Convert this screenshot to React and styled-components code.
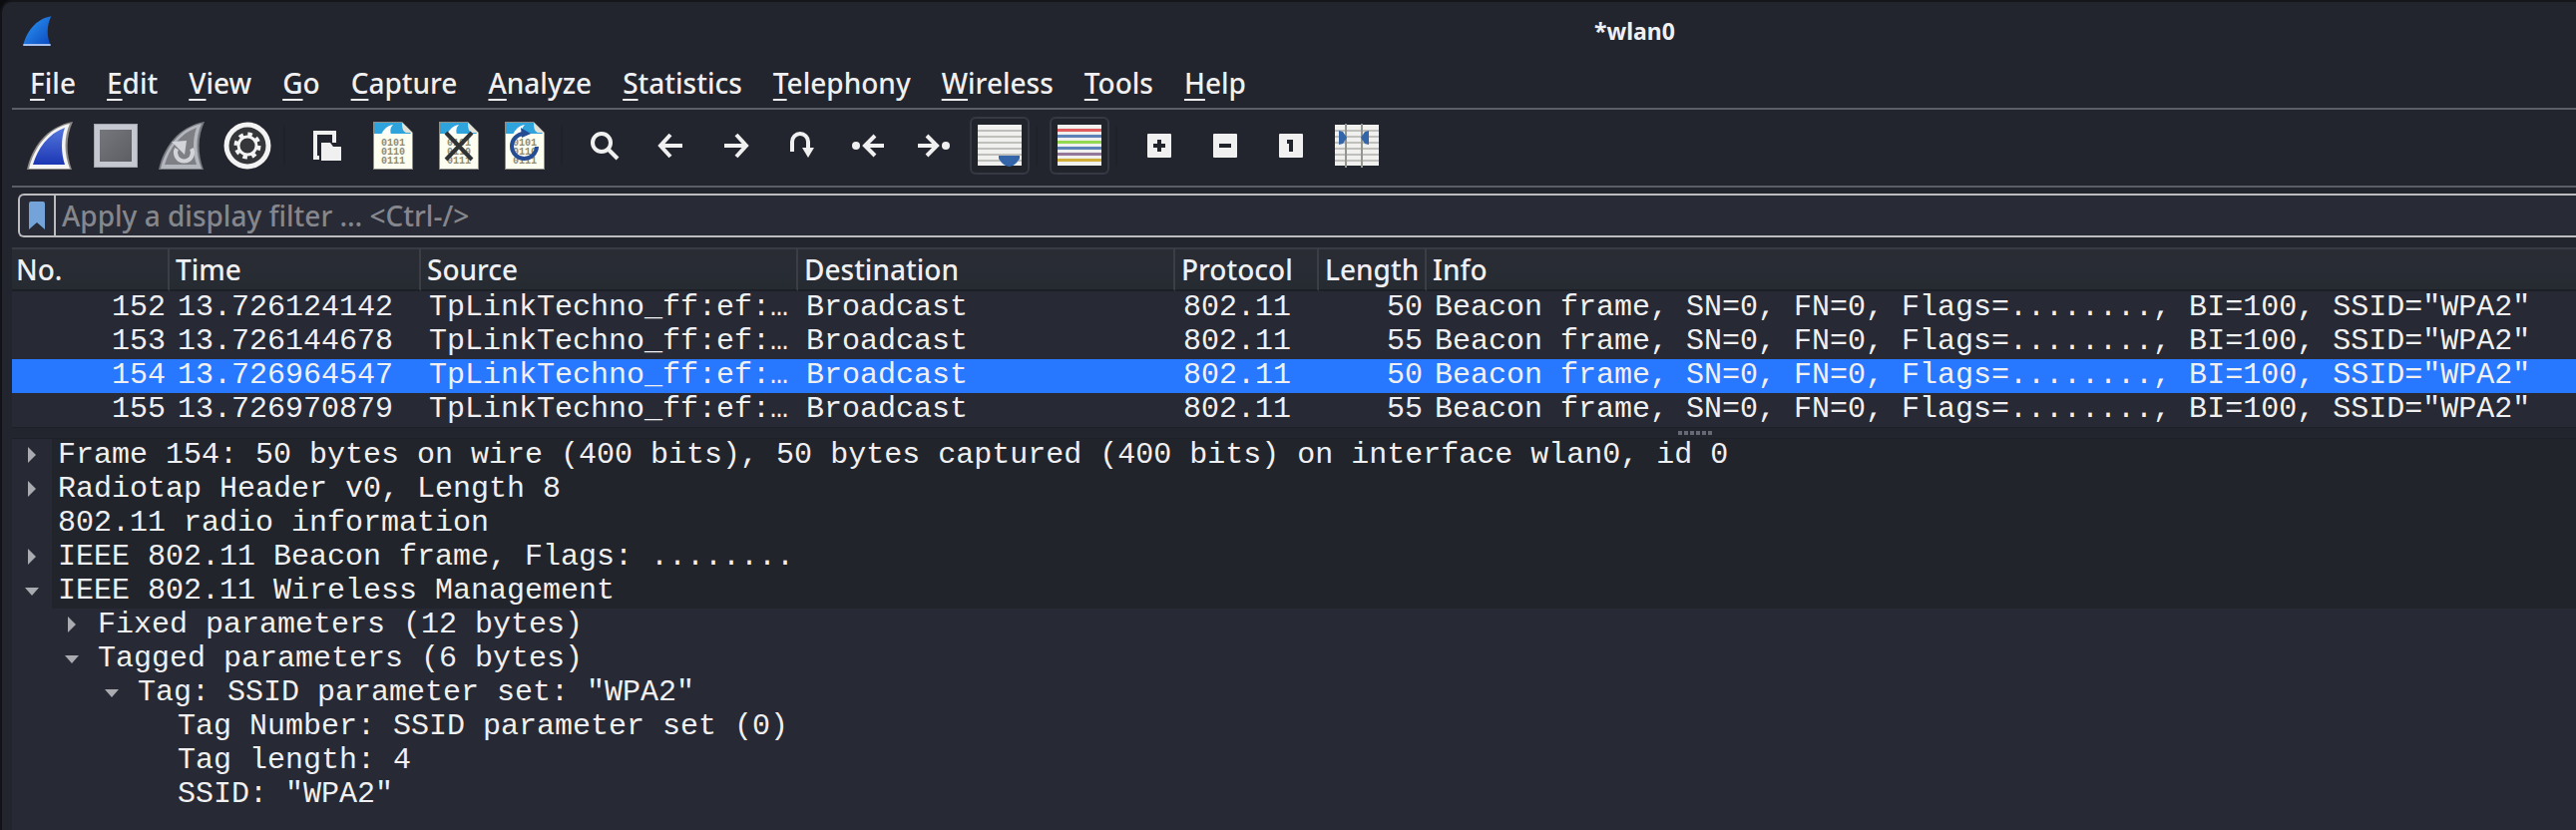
import React from "react";
import styled, { createGlobalStyle, css } from "styled-components";

const sans = `"Noto Sans", sans-serif`;
const mono = `"Liberation Mono", monospace`;

const GlobalStyle = createGlobalStyle`
  * { box-sizing: border-box; }
  body { margin: 0; background: #0c0d10; }
  button { font: inherit; color: inherit; background: none; border: 0; padding: 0; }
`;

const Window = styled.main`
  min-height: 100vh;
  display: flex;
  flex-direction: column;
  padding-left: 10px;
  background: #23252e;
  border-left: 2px solid #111318;
  border-top: 2px solid #14161a;
  border-top-left-radius: 12px;
  color: #f0f0f2;
  font-family: ${sans};
  font-size: 28px;
  font-weight: 500;
`;

const TitleBar = styled.header`
  display: flex;
  align-items: center;
  gap: 8px;
  height: 60px;
  padding: 0 0 2px 10px;
`;

const Title = styled.h1`
  margin: 0 0 0 60%;
  font-size: 23px;
  font-weight: 700;
  line-height: 32px;
`;

const Logo = styled.span`
  display: flex;
  width: 32px;
`;

const MenuBar = styled.nav`
  display: flex;
  gap: 31px;
  height: 48px;
  padding: 0 18px;
  border-bottom: 2px solid #5b5d67;
`;

const MenuItem = styled.button`
  height: 42px;
  line-height: 40px;
  u { text-decoration-thickness: 2px; text-underline-offset: 5px; }
`;

const Toolbar = styled.div`
  display: flex;
  align-items: center;
  gap: 6px;
  height: 78px;
  padding: 0 8px 4px;
  border-bottom: 2px solid #5b5d67;
`;

const ToolButton = styled.button`
  display: flex;
  align-items: center;
  justify-content: center;
  width: 60px;
  height: 58px;
  border-radius: 6px;
  ${(p) => p.$active && css`border: 2px solid #363943; background: #21242b;`}
`;

const ToolSeparator = styled.span`
  width: 8px;
  height: 40px;
  border-left: 2px solid #20222a;
`;

const FilterBar = styled.form`
  display: flex;
  height: 44px;
  margin: 6px 0 10px 6px;
  border: 2px solid #bcbcbe;
  border-right: 0;
  border-radius: 6px 0 0 6px;
  background: #282a36;
`;

const BookmarkButton = styled.button`
  display: flex;
  align-items: center;
  justify-content: center;
  width: 36px;
  border-right: 2px solid #bcbcbe;
`;

const FilterInput = styled.input`
  flex: 1;
  min-width: 0;
  padding: 0 6px;
  border: 0;
  outline: 0;
  background: transparent;
  color: #f0f0f2;
  font: 500 28px ${sans};
  &::placeholder { color: #85878d; opacity: 1; }
`;

const PacketTable = styled.table`
  width: 100%;
  table-layout: fixed;
  border-collapse: separate;
  border-spacing: 0;
  background: #272934;
  cursor: default;
`;

const HeadCell = styled.th`
  height: 44px;
  padding: 0 6px;
  border-top: 2px solid #383b43;
  border-bottom: 2px solid #1d1f26;
  border-right: 2px solid #3b3e47;
  background: linear-gradient(#2a2c34, #262b32);
  font-size: 28px;
  font-weight: 500;
  line-height: 38px;
  text-align: left;
  white-space: nowrap;
  &:first-child { padding-left: 4px; }
  &:last-child { border-right: 0; }
`;

const PacketRow = styled.tr`
  background: ${(p) => (p.$selected ? "#2777ff" : "transparent")};
`;

const Cell = styled.td`
  height: 34px;
  padding: 0 4px 0 8px;
  overflow: hidden;
  font: 30px/32px ${mono};
  text-align: ${(p) => (p.$right ? "right" : "left")};
  vertical-align: top;
  white-space: nowrap;
`;

const Splitter = styled.div`
  display: flex;
  justify-content: center;
  height: 12px;
  padding-left: 804px;
  border-top: 1px solid #1e2027;
  border-bottom: 1px solid #1e2027;
`;

const Details = styled.ul`
  flex: 1;
  margin: 0;
  padding: 0 0 16px;
  list-style: none;
  background: #272934;
  font: 30px/32px ${mono};
`;

const TreeRow = styled.li`
  display: flex;
  height: 34px;
  padding-left: ${(p) => p.$depth * 40}px;
`;

const Twisty = styled.button`
  display: flex;
  align-items: center;
  justify-content: center;
  width: 40px;
  height: 32px;
`;

const TreeLabel = styled.span`
  flex: 1;
  padding-left: 6px;
  white-space: pre;
  background: ${(p) => (p.$root ? "#22242c" : "transparent")};
`;

const FIN = "M2 46 C6 27 20 6 44 2 C37 16 37 32 43 46 Z";

const Fin = () => (
  <svg width="48" height="50" viewBox="0 0 48 50">
    <defs>
      <linearGradient id="finBlue" x1="0" y1="0" x2="0" y2="1">
        <stop offset="0" stopColor="#5577dd" /><stop offset="1" stopColor="#1c37b4" />
      </linearGradient>
    </defs>
    <path d="M1 49 C6 27 20 6 47 1 C40 16 40 33 46 49 Z" fill="#8d8a85" />
    <path d="M3 48 C8 28 21 8 44 3 C38 16 38 33 44 48 Z" fill="#f4f4f4" />
    <path d="M7 44 C12 28 22 13 39 7 C35 18 35 32 39 44 Z" fill="url(#finBlue)" />
  </svg>
);

const Stop = () => (
  <svg width="44" height="44" viewBox="0 0 44 44">
    <defs>
      <linearGradient id="stopGrey" x1="0" y1="0" x2="1" y2="1">
        <stop offset="0" stopColor="#75777c" /><stop offset="1" stopColor="#5c5e64" />
      </linearGradient>
    </defs>
    <rect width="44" height="44" fill="#a4a6ae" />
    <rect x="1" y="1" width="42" height="42" fill="#c6c8d1" />
    <rect x="6" y="6" width="32" height="32" fill="url(#stopGrey)" />
  </svg>
);

const Restart = () => (
  <svg width="48" height="50" viewBox="0 0 48 50">
    <path d="M1 49 C6 27 20 6 47 1 C40 16 40 33 46 49 Z" fill="#77797f" />
    <path d="M3 48 C8 28 21 8 44 3 C38 16 38 33 44 48 Z" fill="#b5b7bf" />
    <path d="M7 44 C12 28 22 13 39 7 C35 18 35 32 39 44 Z" fill="#7e8086" />
    <path d="M19 28 A8.5 8.5 0 1 0 34 28" fill="none" stroke="#d2d4da" strokeWidth="4" />
    <path d="M14 21 L29 20 L27 34 Z" fill="#d2d4da" />
  </svg>
);

const Options = () => (
  <svg width="48" height="48" viewBox="0 0 48 48">
    <circle cx="24" cy="24" r="23.5" fill="#f3f3f3" />
    <circle cx="24" cy="24" r="18.5" fill="#34363a" />
    <circle cx="24" cy="24" r="9" fill="none" stroke="#f3f3f3" strokeWidth="3" />
    <circle cx="24" cy="24" r="11.5" fill="none" stroke="#f3f3f3" strokeWidth="4" strokeDasharray="4.5 4.53" />
  </svg>
);

const OpenFile = () => (
  <svg width="30" height="32" viewBox="0 0 30 32">
    <path d="M7 28 H3 V3 H22 V13" fill="none" stroke="#f0f0f0" strokeWidth="4" />
    <path d="M9 13 H18 L21 17 H29 V31 H9 Z" fill="#f0f0f0" />
  </svg>
);

const Capture = ({ mark }) => (
  <svg width="40" height="48" viewBox="0 0 40 48">
    <path d="M0 0 H29 L40 11 V48 H0 Z" fill="#8d8f88" />
    <path d="M1 1 H29 L39 11 V47 H1 Z" fill="#fdfdf0" />
    <path d="M1 1 H29 L38 12 H1 Z" fill="#2fa3dc" />
    <path d="M8 13 C10 8 14 4 20 3 C17 6 17 9 18 13 Z" fill="#fdfdfa" />
    <path d="M29 1 L39 11 H33 C30 10 29 7 29 1 Z" fill="#e2e2d8" />
    <g fill="#8a8c84" fontFamily="Liberation Mono, monospace" fontSize="10" fontWeight="700">
      <text x="8" y="24">0101</text>
      <text x="8" y="33">0110</text>
      <text x="8" y="42">0111</text>
    </g>
    {mark === "close" && <path d="M7 11 L33 38 M33 11 L7 38" stroke="#303236" strokeWidth="4" />}
    {mark === "reload" && (
      <g>
        <path d="M19 12 A12.5 12.5 0 1 0 32 25" fill="none" stroke="#264d93" strokeWidth="4" />
        <path d="M16 6 L26 12 L17 16 Z" fill="#264d93" />
      </g>
    )}
  </svg>
);

const Line = ({ children }) => (
  <svg width="36" height="32" viewBox="0 0 36 32" fill="none" stroke="#f0f0f0" strokeWidth="4">
    {children}
  </svg>
);

const Find = () => (<Line><circle cx="15" cy="13" r="9" /><path d="M21 19 L31 29" /></Line>);
const Back = () => (<Line><path d="M30 16 H8 M18 5 L8 16 L18 27" /></Line>);
const Forward = () => (<Line><path d="M6 16 H28 M18 5 L28 16 L18 27" /></Line>);
const GoTo = () => (
  <Line><path d="M8 22 V12 A8 8 0 0 1 24 12 V20" /><path d="M18 18 H30 L24 28 Z" fill="#f0f0f0" stroke="none" /></Line>
);
const First = () => (
  <Line><circle cx="6" cy="16" r="4" fill="#f0f0f0" stroke="none" /><path d="M34 16 H16 M25 6 L15 16 L25 26" /></Line>
);
const Last = () => (
  <Line><circle cx="30" cy="16" r="4" fill="#f0f0f0" stroke="none" /><path d="M2 16 H20 M11 6 L21 16 L11 26" /></Line>
);

const AutoScroll = () => (
  <svg width="44" height="42" viewBox="0 0 44 42">
    <rect width="44" height="41" fill="#f0f1ee" />
    {[5, 11, 17, 23, 29, 35].map((y) => <rect key={y} y={y} width="44" height="2" fill="#bfc0bb" />)}
    <path d="M21 31 H42 V34 Q37 42 32 42 Q26 42 21 34 Z" fill="#3465a9" />
  </svg>
);

const Colorize = () => (
  <svg width="44" height="42" viewBox="0 0 44 42">
    <rect width="44" height="41" fill="#f0f1ee" />
    {["#e05c5c", "#5c83b8", "#92d850", "#5c83b8", "#94789c", "#d0ae38"].map((c, i) => (
      <rect key={i} y={4 + i * 6} width="44" height="3" fill={c} />
    ))}
  </svg>
);

const ResizeColumns = () => (
  <svg width="44" height="44" viewBox="0 0 44 44">
    <rect y="1" width="44" height="41" fill="#f0f1ee" />
    {[6, 12, 18, 24, 30, 36].map((y) => <rect key={y} y={y} width="44" height="2" fill="#bfc0bb" />)}
    <path d="M11 0 V44 M27 0 V44" stroke="#94968f" strokeWidth="2" />
    <path d="M4 7 L8 8 L12 14 L8 20 L4 21 Z M34 7 L30 8 L26 14 L30 20 L34 21 Z" fill="#3465a9" />
  </svg>
);

const Square = ({ children }) => (
  <svg width="24" height="24" viewBox="0 0 24 24" stroke="#22242c" strokeWidth="4" fill="none">
    <rect width="24" height="24" rx="1" fill="#f0f0f0" stroke="none" />
    {children}
  </svg>
);
const ZoomIn = () => (<Square><path d="M6 12 H18 M12 6 V18" /></Square>);
const ZoomOut = () => (<Square><path d="M6 12 H18" /></Square>);
const ZoomReset = () => (<Square><path d="M8 8 H12 V18" /></Square>);

const Bookmark = () => (
  <svg width="16" height="28" viewBox="0 0 16 28">
    <path d="M0 2 Q0 0 2 0 H14 Q16 0 16 2 V28 L8 21 L0 28 Z" fill="#73a3d8" />
  </svg>
);

const Arrow = ({ open }) => (
  <svg width="14" height="16" viewBox="0 0 14 16">
    <path d={open ? "M0 5 H14 L7 13 Z" : "M3 0 L11 8 L3 16 Z"} fill="#a9abb0" />
  </svg>
);

const Grip = () => (
  <svg width="34" height="10" viewBox="0 0 34 10">
    {[0, 6, 12, 18, 24, 30].map((x) => <rect key={x} x={x} y="3" width="4" height="4" fill="#666973" />)}
  </svg>
);

const MENUS = ["File", "Edit", "View", "Go", "Capture", "Analyze", "Statistics", "Telephony", "Wireless", "Tools", "Help"];

const TOOLS = [
  [
    ["Start capture", Fin], ["Stop capture", Stop], ["Restart capture", Restart], ["Capture options", Options],
  ],
  [
    ["Open", OpenFile], ["Save", Capture], ["Close", Capture, "close"], ["Reload", Capture, "reload"],
  ],
  [
    ["Find packet", Find], ["Previous packet", Back], ["Next packet", Forward], ["Go to packet", GoTo],
    ["First packet", First], ["Last packet", Last], ["Auto scroll", AutoScroll, null, true],
  ],
  [["Colorize", Colorize, null, true]],
  [["Zoom in", ZoomIn], ["Zoom out", ZoomOut], ["Normal size", ZoomReset], ["Resize columns", ResizeColumns]],
];

const COLUMNS = [["No.", 158], ["Time", 252], ["Source", 378], ["Destination", 378], ["Protocol", 144], ["Length", 108], ["Info"]];

const PACKETS = [
  [152, "13.726124142", 50],
  [153, "13.726144678", 55],
  [154, "13.726964547", 50],
  [155, "13.726970879", 55],
];

const TREE = [
  [0, "closed", "Frame 154: 50 bytes on wire (400 bits), 50 bytes captured (400 bits) on interface wlan0, id 0"],
  [0, "closed", "Radiotap Header v0, Length 8"],
  [0, null, "802.11 radio information"],
  [0, "closed", "IEEE 802.11 Beacon frame, Flags: ........"],
  [0, "open", "IEEE 802.11 Wireless Management"],
  [1, "closed", "Fixed parameters (12 bytes)"],
  [1, "open", "Tagged parameters (6 bytes)"],
  [2, "open", `Tag: SSID parameter set: "WPA2"`],
  [3, null, "Tag Number: SSID parameter set (0)"],
  [3, null, "Tag length: 4"],
  [3, null, `SSID: "WPA2"`],
];

export default function App() {
  return (
    <Window>
      <GlobalStyle />
      <TitleBar>
        <Logo>
          <svg width="32" height="32" viewBox="0 0 48 48">
            <defs>
              <linearGradient id="logoBlue" x1="0" y1="0" x2="1" y2="1">
                <stop offset="0" stopColor="#2e9bf5" /><stop offset="1" stopColor="#0a47c0" />
              </linearGradient>
            </defs>
            <path d={FIN} fill="url(#logoBlue)" />
            <path d="M2 45 H43" stroke="#a8c0ee" strokeWidth="3" />
          </svg>
        </Logo>
        <Title>*wlan0</Title>
      </TitleBar>
      <MenuBar>
        {MENUS.map((m) => (
          <MenuItem key={m} type="button"><u>{m[0]}</u>{m.slice(1)}</MenuItem>
        ))}
      </MenuBar>
      <Toolbar role="toolbar">
        {TOOLS.map((group, g) => (
          <React.Fragment key={g}>
            {g > 0 && <ToolSeparator />}
            {group.map(([label, Icon, mark, active]) => (
              <ToolButton key={label} type="button" aria-label={label} $active={active}>
                <Icon mark={mark} />
              </ToolButton>
            ))}
          </React.Fragment>
        ))}
      </Toolbar>
      <FilterBar>
        <BookmarkButton type="button" aria-label="Filter bookmarks"><Bookmark /></BookmarkButton>
        <FilterInput aria-label="Display filter" placeholder="Apply a display filter … <Ctrl-/>" />
      </FilterBar>
      <PacketTable>
        <colgroup>
          {COLUMNS.map(([name, width]) => <col key={name} width={width} />)}
        </colgroup>
        <thead>
          <tr>{COLUMNS.map(([name]) => <HeadCell key={name}>{name}</HeadCell>)}</tr>
        </thead>
        <tbody>
          {PACKETS.map(([no, time, length]) => (
            <PacketRow key={no} $selected={no === 154}>
              <Cell $right>{no}</Cell>
              <Cell>{time}</Cell>
              <Cell>TpLinkTechno_ff:ef:…</Cell>
              <Cell>Broadcast</Cell>
              <Cell>802.11</Cell>
              <Cell $right>{length}</Cell>
              <Cell>Beacon frame, SN=0, FN=0, Flags=........, BI=100, SSID="WPA2"</Cell>
            </PacketRow>
          ))}
        </tbody>
      </PacketTable>
      <Splitter><Grip /></Splitter>
      <Details>
        {TREE.map(([depth, state, text]) => (
          <TreeRow key={text} $depth={depth}>
            {state ? (
              <Twisty type="button" aria-label={text} aria-expanded={state === "open"}>
                <Arrow open={state === "open"} />
              </Twisty>
            ) : (
              <Twisty as="span" />
            )}
            <TreeLabel $root={depth === 0}>{text}</TreeLabel>
          </TreeRow>
        ))}
      </Details>
    </Window>
  );
}
